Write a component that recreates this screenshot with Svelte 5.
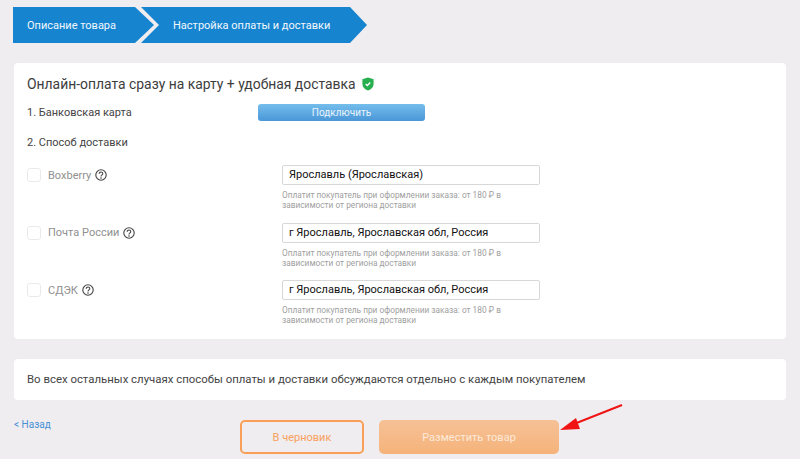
<script>
	const services = [
		{ name: 'Boxberry', city: 'Ярославль (Ярославская)' },
		{ name: 'Почта России', city: 'г Ярославль, Ярославская обл, Россия' },
		{ name: 'СДЭК', city: 'г Ярославль, Ярославская обл, Россия' }
	];
</script>

<div class="page">
	<nav class="steps">
		<div class="step step-first">Описание товара</div>
		<div class="step step-second">Настройка оплаты и доставки</div>
	</nav>

	<section class="card main-card">
		<h2 class="title">
			Онлайн-оплата сразу на карту + удобная доставка
			<svg class="shield" viewBox="0 0 12 14" width="12" height="14" aria-hidden="true">
				<path d="M6 .5 11.6 2.3V7c0 3.2-2.4 5.3-5.6 6.6C2.800 12.300.4 10.200.4 7V2.300Z" fill="#27ae4f" />
				<path d="M3.700 7 5.300 8.500 8.300 5.500" fill="none" stroke="#fff" stroke-width="1.300" />
			</svg>
		</h2>

		<div class="bank-row">
			<span class="bank-label">1. Банковская карта</span>
			<button class="connect">Подключить</button>
		</div>

		<div class="delivery-label">2. Способ доставки</div>

		{#each services as service}
			<div class="service">
				<div class="service-name">
					<span class="checkbox"></span>
					<span>{service.name}</span>
					<svg class="help" viewBox="0 0 12 12" width="12" height="12" aria-hidden="true">
						<circle cx="6" cy="6" r="5.200" fill="none" stroke="#444" stroke-width="1.100" />
						<path d="M4.200 4.800C4.200 3.700 5 3 6 3S7.800 3.700 7.800 4.700C7.800 5.900 6 6 6 7.400" fill="none" stroke="#444" stroke-width="1.100" />
						<circle cx="6" cy="9" r=".8" fill="#444" />
					</svg>
				</div>
				<div class="service-field">
					<div class="city">{service.city}</div>
					<p class="hint">Оплатит покупатель при оформлении заказа: от 180 ₽ в зависимости от региона доставки</p>
				</div>
			</div>
		{/each}
	</section>

	<section class="card note">
		Во всех остальных случаях способы оплаты и доставки обсуждаются отдельно с каждым покупателем
	</section>

	<footer class="footer">
		<a class="back" href="#back">&lt; Назад</a>
		<button class="btn draft">В черновик</button>
		<button class="btn publish">Разместить товар</button>
		<svg class="arrow" viewBox="0 0 64 30" width="64" height="30" aria-hidden="true">
			<path d="M62 1 14 20" stroke="#f01414" stroke-width="2" fill="none" />
			<path d="M0 26 16 14 20 25Z" fill="#f01414" />
		</svg>
	</footer>
</div>

<style>
	:global(body) {
		background: #efedf0;
	}

	.page {
		box-sizing: border-box;
		height: 459px;
		padding: 7px 14px 0 13px;
		overflow: hidden;
		font-family: Roboto, 'Liberation Sans', sans-serif;
		font-size: 11px;
		color: #444;
	}

	.steps {
		display: flex;
		height: 36px;
	}

	.step {
		display: flex;
		align-items: center;
		box-sizing: border-box;
		height: 36px;
		background: #1784d0;
		color: #f2f8fc;
		font-size: 11px;
	}

	.step-first {
		width: 141px;
		padding-left: 14px;
		clip-path: polygon(0 0, 122px 0, 141px 18px, 122px 36px, 0 36px);
	}

	.step-second {
		width: 226px;
		margin-left: -13px;
		padding-left: 32px;
		clip-path: polygon(0 0, 209px 0, 226px 18px, 209px 36px, 0 36px, 18px 18px);
	}

	.card {
		margin-left: 1px;
		background: #fff;
		border-radius: 4px;
	}

	.main-card {
		box-sizing: border-box;
		height: 276px;
		margin-top: 20px;
		padding: 11px 13px 0;
	}

	.title {
		display: flex;
		align-items: center;
		gap: 6px;
		margin: 0;
		height: 19px;
		font-size: 13.900px;
		font-weight: 400;
		color: #3d3d3d;
	}

	.bank-row {
		display: flex;
		align-items: center;
		margin-top: 11px;
		height: 17px;
	}

	.bank-label {
		width: 231px;
	}

	.connect {
		width: 167px;
		height: 17px;
		padding: 0;
		border: none;
		border-radius: 3px;
		background: linear-gradient(#74bdec, #4a97d8);
		color: #eaf4fb;
		font: inherit;
		font-size: 10px;
	}

	.delivery-label {
		margin-top: 14px;
		height: 15px;
		line-height: 15px;
	}

	.service {
		display: flex;
		height: 57.5px;
	}

	.delivery-label + .service {
		margin-top: 15px;
	}

	.service-name {
		display: flex;
		align-items: center;
		gap: 4px;
		width: 255px;
		height: 20px;
		color: #909090;
	}

	.checkbox {
		box-sizing: border-box;
		width: 14px;
		height: 14px;
		margin-right: 3px;
		border: 1px solid #eaeaea;
		border-radius: 3px;
	}

	.service-field {
		width: 258px;
	}

	.city {
		box-sizing: border-box;
		height: 20px;
		padding-left: 6px;
		border: 1px solid #d8d8d8;
		border-radius: 2px;
		color: #111;
		font-size: 11px;
		line-height: 18px;
	}

	.hint {
		margin: 5px 0 0;
		color: #a0a0a0;
		font-size: 8.300px;
		line-height: 10px;
	}

	.note {
		box-sizing: border-box;
		height: 41px;
		margin-top: 20px;
		padding-left: 13px;
		line-height: 41px;
		font-size: 11.400px;
	}

	.footer {
		position: relative;
		display: flex;
		align-items: flex-start;
		margin-top: 20px;
		padding-left: 1px;
	}

	.back {
		width: 226px;
		margin-top: -1px;
		color: #4a90d4;
		font-size: 10px;
		text-decoration: none;
	}

	.btn {
		height: 34px;
		border-radius: 5px;
		font: inherit;
		font-size: 11px;
	}

	.draft {
		width: 124px;
		border: 2px solid #fa9f57;
		background: transparent;
		color: #f9a05c;
	}

	.publish {
		width: 180px;
		margin-left: 15px;
		border: none;
		background: linear-gradient(#f6c196, #f5b37b);
		color: #fde9d8;
	}

	/* annotation drawn over the screenshot */
	.arrow {
		position: absolute;
		left: 547px;
		top: -16px;
	}
</style>
